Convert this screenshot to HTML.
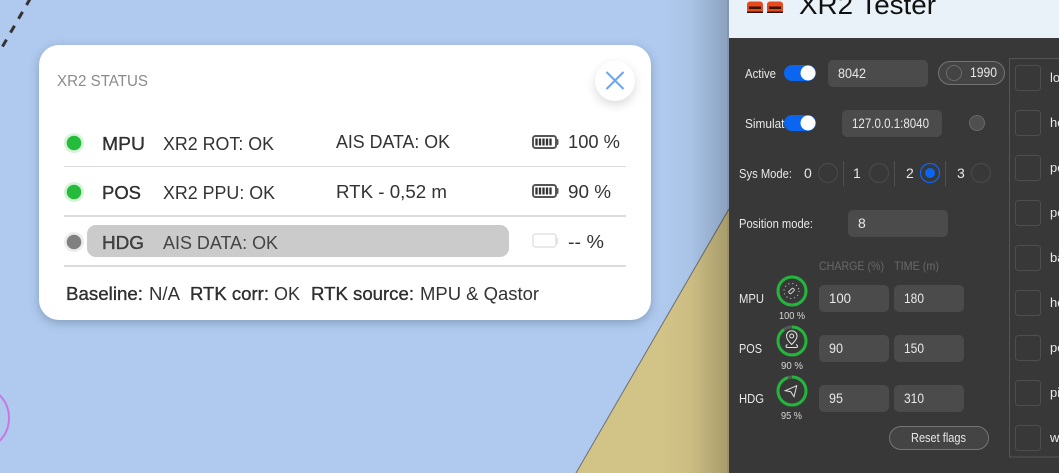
<!DOCTYPE html>
<html><head><meta charset="utf-8"><style>
html,body{margin:0;padding:0;background:#afcaee;overflow:hidden;width:1059px;height:473px}
svg{display:block;font-family:"Liberation Sans",sans-serif}
.c{filter:drop-shadow(0 3px 5px rgba(40,60,90,.3))}
.b{filter:drop-shadow(0 4px 5px rgba(0,0,0,.14))}
.m{stroke:currentColor;stroke-width:.25px}
</style></head><body>
<svg width="1059" height="473" viewBox="0 0 1059 473" xmlns="http://www.w3.org/2000/svg">
<defs><linearGradient id="sh" x1="0" x2="1" y1="0" y2="0"><stop offset="0" stop-color="#000" stop-opacity="0"/><stop offset=".45" stop-color="#000" stop-opacity=".03"/><stop offset="1" stop-color="#000" stop-opacity=".2"/></linearGradient></defs>
<rect width="1059" height="473" fill="#afcaee"/>
<path d="M576 473L729 209V473Z" fill="#d2c387"/>
<path d="M576 473L729 209" stroke="#6f6f6f" stroke-width="1" fill="none"/>
<path d="M2.500 46.500L30 -1" stroke="#333" stroke-width="3" stroke-dasharray="8 8" fill="none"/>
<circle cx="-23.600" cy="418" r="32.600" fill="none" stroke="#c878e0" stroke-width="2"/>
<rect x="660" width="67" height="473" fill="url(#sh)"/>
<rect x="727" width="2" height="473" fill="#000" opacity=".25"/>

<rect class="c" x="39" y="45" width="612" height="275" rx="20" fill="#fff"/>
<text x="57" y="86" font-size="16" fill="#8b8b8b" textLength="91" lengthAdjust="spacingAndGlyphs">XR2 STATUS</text>
<circle class="b" cx="615" cy="81" r="20" fill="#fff"/>
<path d="M606.500 72L623.500 89M623.500 72L606.500 89" stroke="#6aa5f2" stroke-width="2" fill="none"/>

<g fill="#d6f2da"><circle cx="74" cy="143" r="10"/><circle cx="74" cy="192" r="10"/></g>
<g fill="#25bb3b"><circle cx="74" cy="143" r="7.300"/><circle cx="74" cy="192" r="7.300"/></g>
<circle cx="74" cy="242" r="10" fill="#ececec"/><circle cx="74" cy="242" r="7.300" fill="#808080"/>
<g fill="#dcdcdc"><rect x="64" y="166" width="562" height="1"/><rect x="64" y="215" width="562" height="2"/><rect x="64" y="265" width="562" height="2"/></g>
<rect x="87" y="225" width="422" height="32" rx="9" fill="#cbcbcb"/>

<g font-size="18.500" fill="#333">
<text class="m" x="102" y="150" textLength="43" lengthAdjust="spacingAndGlyphs">MPU</text>
<text x="163" y="150" textLength="111" lengthAdjust="spacingAndGlyphs">XR2 ROT: OK</text>
<text x="336" y="148" textLength="114" lengthAdjust="spacingAndGlyphs">AIS DATA: OK</text>
<text x="568" y="148" textLength="52" lengthAdjust="spacingAndGlyphs">100 %</text>
<text class="m" x="102" y="199" textLength="39" lengthAdjust="spacingAndGlyphs">POS</text>
<text x="163" y="199" textLength="112" lengthAdjust="spacingAndGlyphs">XR2 PPU: OK</text>
<text x="336" y="198" textLength="111" lengthAdjust="spacingAndGlyphs">RTK - 0,52 m</text>
<text x="568" y="198" textLength="43" lengthAdjust="spacingAndGlyphs">90 %</text>
<text class="m" x="102" y="249" textLength="42" lengthAdjust="spacingAndGlyphs" fill="#444">HDG</text>
<text x="163" y="249" textLength="115" lengthAdjust="spacingAndGlyphs" fill="#444">AIS DATA: OK</text>
<text x="568" y="248" textLength="36" lengthAdjust="spacingAndGlyphs">-- %</text>
<text class="m" x="66" y="300" textLength="77" lengthAdjust="spacingAndGlyphs">Baseline:</text>
<text x="149" y="300" textLength="31" lengthAdjust="spacingAndGlyphs">N/A</text>
<text class="m" x="190" y="300" textLength="79" lengthAdjust="spacingAndGlyphs">RTK corr:</text>
<text x="274" y="300" textLength="26" lengthAdjust="spacingAndGlyphs">OK</text>
<text class="m" x="311" y="300" textLength="103" lengthAdjust="spacingAndGlyphs">RTK source:</text>
<text x="420" y="300" textLength="119" lengthAdjust="spacingAndGlyphs">MPU &amp; Qastor</text>
</g>

<rect x="533" y="136" width="23" height="12" rx="2.500" fill="#fff" stroke="#555" stroke-width="2"/><rect x="556" y="139" width="2.500" height="6" rx="1" fill="#555"/>
<path d="M536.500 138.500V145.500M540 138.500V145.500M543.500 138.500V145.500M547 138.500V145.500M550.500 138.500V145.500" stroke="#333" stroke-width="2.300"/>
<rect x="533" y="185" width="23" height="12" rx="2.500" fill="#fff" stroke="#555" stroke-width="2"/><rect x="556" y="188" width="2.500" height="6" rx="1" fill="#555"/>
<path d="M536.500 187.500V194.500M540 187.500V194.500M543.500 187.500V194.500M547 187.500V194.500M550.500 187.500V194.500" stroke="#333" stroke-width="2.300"/>
<rect x="533" y="234" width="23" height="13" rx="2.500" fill="#fff" stroke="#e2e2e2" stroke-width="1.500"/><rect x="556" y="238" width="2" height="6" fill="#e2e2e2"/>

<rect x="729" width="330" height="38" fill="#eaf2f9"/>
<rect x="729" y="38" width="330" height="435" fill="#383838"/>
<rect x="747" y="1.500" width="16" height="11.500" rx="3" fill="#e8491d"/><rect x="749" y="6.500" width="12" height="2.500" fill="#3a1408"/><rect x="747" y="11.500" width="16" height="1.500" fill="#2a1510"/>
<rect x="767" y="1.500" width="16" height="11.500" rx="3" fill="#e8491d"/><rect x="769" y="6.500" width="12" height="2.500" fill="#3a1408"/><rect x="767" y="11.500" width="16" height="1.500" fill="#2a1510"/>
<text x="799" y="14" font-size="27" fill="#111" textLength="137" lengthAdjust="spacingAndGlyphs">XR2 Tester</text>

<g fill="none" stroke="#555"><rect x="1009.500" y="58.500" width="60" height="398.500"/></g>
<g fill="none" stroke="#4e4e4e" stroke-width="1">
<rect x="1015.500" y="65.500" width="25" height="25" rx="3"/><rect x="1015.500" y="110.500" width="25" height="25" rx="3"/><rect x="1015.500" y="155.500" width="25" height="25" rx="3"/><rect x="1015.500" y="200.500" width="25" height="25" rx="3"/><rect x="1015.500" y="245.500" width="25" height="25" rx="3"/><rect x="1015.500" y="290.500" width="25" height="25" rx="3"/><rect x="1015.500" y="335.500" width="25" height="25" rx="3"/><rect x="1015.500" y="380.500" width="25" height="25" rx="3"/><rect x="1015.500" y="425.500" width="25" height="25" rx="3"/>
</g>
<g font-size="13" fill="#e8e8e8">
<text x="1050" y="82">lo</text><text x="1050" y="127">he</text><text x="1050" y="172">po</text><text x="1050" y="217">po</text><text x="1050" y="262">ba</text><text x="1050" y="307">ho</text><text x="1050" y="352">po</text><text x="1050" y="397">pi</text><text x="1050" y="442">w</text>
<text x="745" y="78" textLength="31" lengthAdjust="spacingAndGlyphs">Active</text>
<text x="745" y="128" textLength="50" lengthAdjust="spacingAndGlyphs">Simulator</text>
<text x="739" y="178" textLength="53" lengthAdjust="spacingAndGlyphs">Sys Mode:</text>
<text x="739" y="228" textLength="74" lengthAdjust="spacingAndGlyphs">Position mode:</text>
<text x="739" y="303" textLength="25" lengthAdjust="spacingAndGlyphs">MPU</text>
<text x="739" y="353" textLength="23" lengthAdjust="spacingAndGlyphs">POS</text>
<text x="739" y="403" textLength="25" lengthAdjust="spacingAndGlyphs">HDG</text>
</g>
<g fill="#0a66f0"><rect x="784" y="65" width="32" height="16" rx="8"/><rect x="784" y="115" width="32" height="16" rx="8"/></g>
<g fill="#fff"><circle cx="808" cy="73" r="7.500"/><circle cx="808" cy="123" r="7.500"/></g>
<g fill="#4b4b4b">
<rect x="828" y="60" width="100" height="27" rx="5"/><rect x="842" y="110" width="100" height="27" rx="5"/><rect x="848" y="210" width="100" height="27" rx="5"/>
<rect x="819" y="285" width="70" height="27" rx="5"/><rect x="894" y="285" width="70" height="27" rx="5"/>
<rect x="819" y="335" width="70" height="27" rx="5"/><rect x="894" y="335" width="70" height="27" rx="5"/>
<rect x="819" y="385" width="70" height="27" rx="5"/><rect x="894" y="385" width="70" height="27" rx="5"/>
</g>
<rect x="938.500" y="61.500" width="66" height="23" rx="11.500" fill="#444" stroke="#747474"/>
<circle cx="954" cy="73" r="7.500" fill="none" stroke="#6a6a6a"/>
<circle cx="977" cy="123" r="7.500" fill="#4f4f4f" stroke="#686868"/>
<g font-size="14" fill="#e8e8e8">
<text x="838" y="78" textLength="28" lengthAdjust="spacingAndGlyphs">8042</text>
<text x="970" y="77" textLength="27" lengthAdjust="spacingAndGlyphs">1990</text>
<text x="852" y="128" textLength="77" lengthAdjust="spacingAndGlyphs">127.0.0.1:8040</text>
<text x="858" y="228">8</text>
<text x="829" y="303" textLength="22" lengthAdjust="spacingAndGlyphs">100</text><text x="904" y="303" textLength="20" lengthAdjust="spacingAndGlyphs">180</text>
<text x="829" y="353" textLength="14" lengthAdjust="spacingAndGlyphs">90</text><text x="904" y="353" textLength="20" lengthAdjust="spacingAndGlyphs">150</text>
<text x="829" y="403" textLength="14" lengthAdjust="spacingAndGlyphs">95</text><text x="904" y="403" textLength="20" lengthAdjust="spacingAndGlyphs">310</text>
<text x="804" y="178">0</text><text x="853" y="178">1</text><text x="906" y="178">2</text><text x="957" y="178">3</text>
</g>
<g fill="none" stroke="#484848" stroke-width="1.200"><circle cx="828" cy="173" r="9.500"/><circle cx="879" cy="173" r="9.500"/><circle cx="981" cy="173" r="9.500"/></g>
<circle cx="930" cy="173" r="9.500" fill="none" stroke="#0a66f0" stroke-width="1.300"/><circle cx="930" cy="173" r="5" fill="#0a66f0"/>
<path d="M843.500 161V186M894.500 161V186M945.500 161V186" stroke="#505050"/>
<g font-size="12" fill="#686868"><text x="819" y="270" textLength="65" lengthAdjust="spacingAndGlyphs">CHARGE (%)</text><text x="894" y="270" textLength="45" lengthAdjust="spacingAndGlyphs">TIME (m)</text></g>

<g fill="none" stroke="#585858" stroke-width="3"><circle cx="792" cy="291" r="14"/><circle cx="792" cy="341" r="14"/><circle cx="792" cy="391" r="14"/></g>
<g fill="none" stroke="#22b73a" stroke-width="3">
<circle cx="792" cy="291" r="14"/>
<circle cx="792" cy="341" r="14" stroke-dasharray="79.200 88" transform="rotate(-90 792 341)"/>
<circle cx="792" cy="391" r="14" stroke-dasharray="83.600 88" transform="rotate(-90 792 391)"/>
</g>
<circle cx="791.500" cy="291" r="7.500" fill="none" stroke="#cfcfcf" stroke-dasharray="1 3"/>
<rect x="788.500" y="289.500" width="6" height="3" rx="1" fill="none" stroke="#e4e4e4" stroke-width=".9" transform="rotate(-45 791.500 291)"/>
<g fill="none" stroke="#e4e4e4" stroke-width="1">
<path d="M791.700 344.500C788 340.500 786.500 338.500 786.500 336A5.200 5.200 0 0 1 797 336C797 338.500 795.500 340.500 791.700 344.500Z"/><circle cx="791.700" cy="336" r="2"/><path d="M787.500 344.500C785.500 345.500 785.500 347.500 787.500 347.500H796C798 347.500 798 345.500 796 344.500"/>
<path d="M796.700 385.700L785.300 390.700L790.700 391.700L794 396.700Z"/>
</g>
<g font-size="10.500" fill="#d8d8d8">
<text x="779" y="319" textLength="26" lengthAdjust="spacingAndGlyphs">100 %</text>
<text x="781" y="369" textLength="22" lengthAdjust="spacingAndGlyphs">90 %</text>
<text x="781" y="419" textLength="21" lengthAdjust="spacingAndGlyphs">95 %</text>
</g>
<rect x="889.500" y="426.500" width="99" height="23" rx="11.500" fill="#444" stroke="#757575"/>
<text x="911" y="442" font-size="13" fill="#e8e8e8" textLength="55" lengthAdjust="spacingAndGlyphs">Reset flags</text>
</svg>
</body></html>
